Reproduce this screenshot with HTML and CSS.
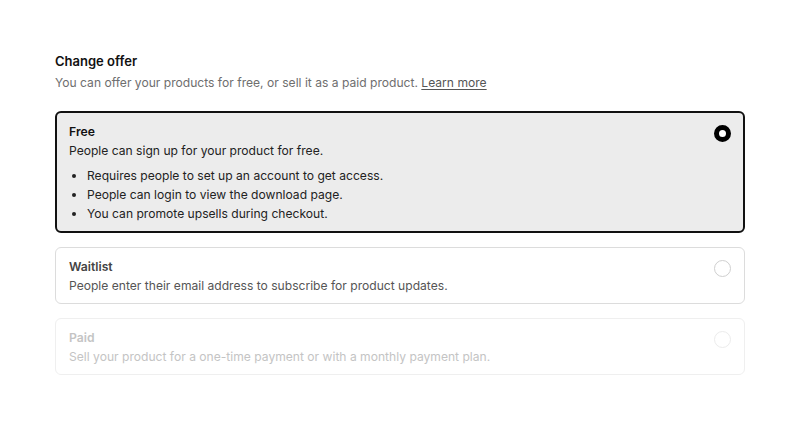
FILE: index.html
```html
<!DOCTYPE html>
<html>
<head>
<meta charset="utf-8">
<link rel="stylesheet" href="styles.css">
</head>
<body>
<div class="page">
  <h2 class="title">Change offer</h2>
  <p class="subtitle">You can offer your products for free, or sell it as a paid product. <a class="link" href="#">Learn more</a></p>
  <div class="options">
    <div class="option selected">
      <div class="body">
        <div class="name">Free</div>
        <div class="desc">People can sign up for your product for free.</div>
        <ul class="bullets">
          <li>Requires people to set up an account to get access.</li>
          <li>People can login to view the download page.</li>
          <li>You can promote upsells during checkout.</li>
        </ul>
      </div>
      <span class="radio"></span>
    </div>
    <div class="option">
      <div class="body">
        <div class="name">Waitlist</div>
        <div class="desc">People enter their email address to subscribe for product updates.</div>
      </div>
      <span class="radio"></span>
    </div>
    <div class="option disabled">
      <div class="body">
        <div class="name">Paid</div>
        <div class="desc">Sell your product for a one-time payment or with a monthly payment plan.</div>
      </div>
      <span class="radio"></span>
    </div>
  </div>
</div>
</body>
</html>
```
FILE: styles.css
```css
* { box-sizing: border-box; }
html, body { margin: 0; padding: 0; background: #fff; }
body { font-family: Inter, "Noto Sans", sans-serif; color: #111; }
.page { width: 690px; margin-left: 55px; padding-top: 51px; }
.title { margin: 0; font-size: 13px; font-weight: 600; line-height: 20px; color: #111; }
.subtitle { margin: 2px 0 0; font-size: 12.1px; line-height: 20px; color: #6e6e6e; }
.link { color: #555; text-decoration: underline; text-underline-offset: 2px; }
.options { margin-top: 18px; display: flex; flex-direction: column; gap: 14px; }
.option { display: flex; align-items: flex-start; border: 1px solid #dcdcdc; border-radius: 6px; padding: 9px 13px 8px 13px; background: #fff; }
.option.selected { border: 2px solid #111; background: #ececec; padding: 9px 12px 8px 12px; }
.option.disabled { border-color: #efefef; }
.body { flex: 1; }
.name { font-size: 12.2px; font-weight: 600; line-height: 19px; color: #111; }
.desc { font-size: 12.1px; line-height: 19px; color: #222; }
.option:not(.selected) .name { color: #444; }
.option:not(.selected) .desc { color: #555; }
.option.disabled .name, .option.disabled .desc { color: #c4c4c4; }
.bullets { margin: 6px 0 0; padding-left: 18px; font-size: 12.1px; line-height: 19px; color: #222; }
.radio { width: 17px; height: 17px; border-radius: 50%; border: 1px solid #cfcfcf; margin-top: 3px; flex: none; background: #fff; }
.selected .radio { border: 5px solid #000; background: #fff; }
.disabled .radio { border-color: #ececec; }
```
